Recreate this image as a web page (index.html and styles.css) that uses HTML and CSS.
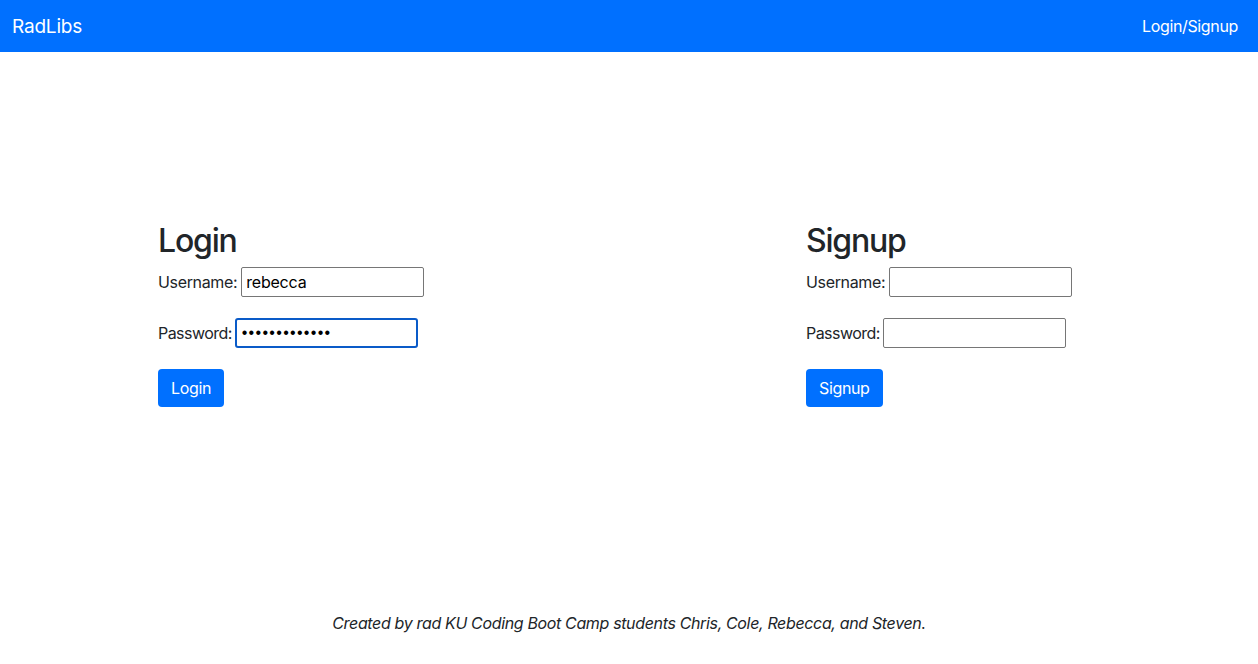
FILE: index.html
```html
<!DOCTYPE html>
<html lang="en">
<head>
<meta charset="utf-8">
<title>RadLibs</title>
<link rel="stylesheet" href="styles.css">
</head>
<body>
<nav class="navbar">
  <a class="brand" href="#">RadLibs</a>
  <a class="nav-link" href="#">Login/Signup</a>
</nav>
<main class="main">
  <section class="panel">
    <h2 class="title">Login</h2>
    <form class="form">
      <div class="field"><label>Username:</label><input class="input" type="text" value="rebecca"></div>
      <div class="field"><label class="label-pass">Password:</label><input class="input input-pass input-focus" type="password" value="rebeccapasswd"></div>
      <div class="field"><button class="btn" type="button">Login</button></div>
    </form>
  </section>
  <section class="panel">
    <h2 class="title">Signup</h2>
    <form class="form">
      <div class="field"><label>Username:</label><input class="input" type="text"></div>
      <div class="field"><label class="label-pass">Password:</label><input class="input input-pass" type="password"></div>
      <div class="field"><button class="btn" type="button">Signup</button></div>
    </form>
  </section>
</main>
<footer class="footer">Created by rad KU Coding Boot Camp students Chris, Cole, Rebecca, and Steven.</footer>
</body>
</html>
```
FILE: styles.css
```css
* { box-sizing: border-box; }
html, body { margin: 0; padding: 0; }
body {
  font-family: Inter, "Noto Sans", "Liberation Sans", sans-serif;
  font-size: 16px;
  letter-spacing: -0.35px;
  color: #212529;
  background: #fff;
  height: 664px;
  display: flex;
  flex-direction: column;
}
.navbar {
  height: 52px;
  background: #0070ff;
  display: flex;
  align-items: center;
  justify-content: space-between;
  padding: 0 20px 0 12px;
}
.brand {
  color: #fff;
  text-decoration: none;
  font-size: 19px;
  letter-spacing: -0.2px;
}
.nav-link {
  color: #fff;
  text-decoration: none;
  font-size: 16px;
}
.main {
  display: grid;
  grid-template-columns: 648px 1fr;
  padding: 170px 0 0 158px;
  flex: 1;
}
.title {
  margin: 0 0 7px;
  font-size: 32px;
  font-weight: 500;
  line-height: 38px;
  letter-spacing: -1.2px;
}
.form {
  display: flex;
  flex-direction: column;
  gap: 21px;
}
.field {
  display: flex;
  align-items: center;
  height: 30px;
}
.field label { margin-right: 4px; }
.field .label-pass { letter-spacing: -0.55px; margin-right: 3px; }
.input {
  width: 183px;
  height: 30px;
  border: 1px solid #767676;
  border-radius: 2px;
  padding: 1px 4px;
  font-family: inherit;
  font-size: 16px;
  letter-spacing: -0.2px;
  color: #000;
}
.input-pass {
  font-family: "Liberation Sans", sans-serif;
  letter-spacing: 1.3px;
}
.input-focus {
  border: 2px solid #0a5bc8;
  border-radius: 3px;
  outline: none;
  padding: 0 3px 0 5px;
}
.btn {
  margin-top: 8px;
  height: 38px;
  padding: 0 13px;
  background: #0070ff;
  color: #fff;
  border: none;
  border-radius: 4px;
  font-family: inherit;
  font-size: 16px;
  letter-spacing: -0.35px;
}
.footer {
  text-align: center;
  font-style: italic;
  padding-bottom: 31px;
}
```
